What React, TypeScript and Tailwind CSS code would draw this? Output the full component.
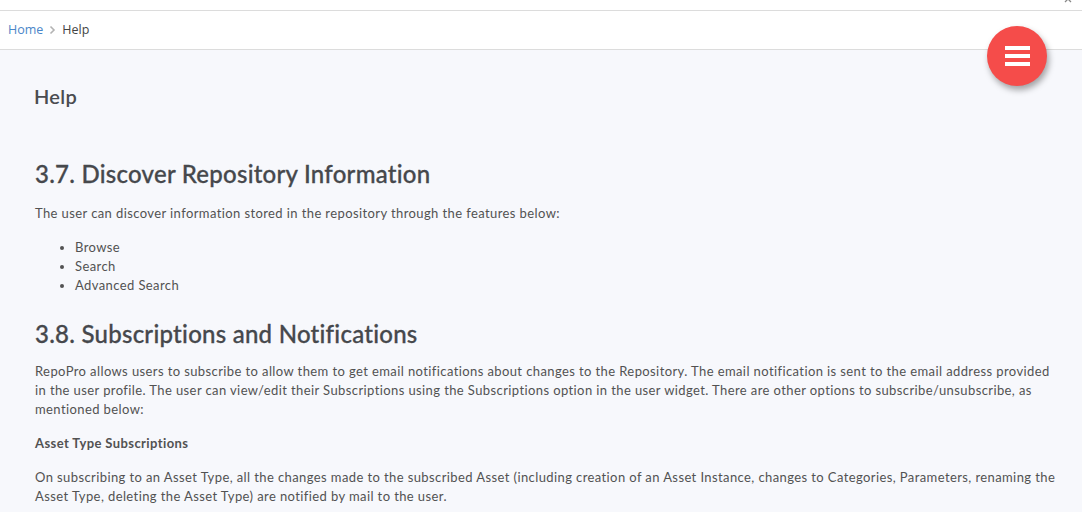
import React from 'react';

const Breadcrumb = () => (
  <div
    className="flex h-[39px] items-center border-b border-[#dcdcdc] bg-white px-[8px] text-[12.5px]"
    style={{ fontFamily: '"Open Sans", "Liberation Sans", sans-serif' }}
  >
    <span className="text-[#4a86c8]">Home</span>
    <svg className="mx-[6px]" width="7" height="10" viewBox="0 0 7 10">
      <path d="M1.5 1.5 L5 5 L1.5 8.5" fill="none" stroke="#b3b3b3" strokeWidth="1.6" />
    </svg>
    <span className="text-[#444]">Help</span>
  </div>
);

export default function App() {
  return (
    <div
      className="relative h-[512px] w-[1082px] overflow-hidden bg-[#f7f8fc] text-[#525252]"
      style={{ fontFamily: 'Lato, "Open Sans", sans-serif' }}
    >
      {/* top strip with clipped close icon */}
      <div className="relative h-[11px] border-b border-[#dcdcdc] bg-white">
        <svg className="absolute right-[10px] top-[-5px]" width="8" height="8" viewBox="0 0 8 8">
          <path d="M1 1 L7 7 M7 1 L1 7" stroke="#888" strokeWidth="1.3" />
        </svg>
      </div>
      <Breadcrumb />

      {/* floating menu button */}
      <button className="absolute right-[35px] top-[26px] flex h-[60px] w-[60px] flex-col items-center justify-center gap-[4px] rounded-full bg-[#f54c4a] shadow-[2px_4px_6px_rgba(0,0,0,0.35)]">
        <span className="block h-[4px] w-[25px] bg-white" />
        <span className="block h-[4px] w-[25px] bg-white" />
        <span className="block h-[4px] w-[25px] bg-white" />
      </button>

      <div className="pl-[35px] pr-[24px] pt-[32px]">
        <h1 className="-ml-[1px] text-[20px] font-semibold leading-[28px] tracking-[0.3px] text-[#4a4c50]">Help</h1>

        <h2 className="mt-[49px] text-[24px] font-medium leading-[29px] tracking-[0.25px] text-[#46484c] [-webkit-text-stroke:0.3px_#46484c]">
          3.7. Discover Repository Information
        </h2>
        <div className="text-[13px] leading-[19px] tracking-[0.4px]">
          <p className="mt-[16px]">
            The user can discover information stored in the repository through the features below:
          </p>
          <ul className="mt-[15px] list-disc pl-[40px]">
            <li>Browse</li>
            <li>Search</li>
            <li>Advanced Search</li>
          </ul>
        </div>

        <h2 className="mt-[24px] text-[24px] font-medium leading-[29px] tracking-[0.25px] text-[#46484c] [-webkit-text-stroke:0.3px_#46484c]">
          3.8. Subscriptions and Notifications
        </h2>
        <div className="text-[13px] leading-[19px] tracking-[0.4px]">
          <p className="mt-[14px]">
            RepoPro allows users to subscribe to allow them to get email notifications about changes to the Repository. The email notification is sent to the email address provided in the user profile. The user can view/edit their Subscriptions using the Subscriptions option in the user widget. There are other options to subscribe/unsubscribe, as mentioned below:
          </p>
          <p className="mt-[15px] font-bold">Asset Type Subscriptions</p>
          <p className="mt-[15px]">
            On subscribing to an Asset Type, all the changes made to the subscribed Asset (including creation of an Asset Instance, changes to Categories, Parameters, renaming the Asset Type, deleting the Asset Type) are notified by mail to the user.
          </p>
        </div>
      </div>
    </div>
  );
}
